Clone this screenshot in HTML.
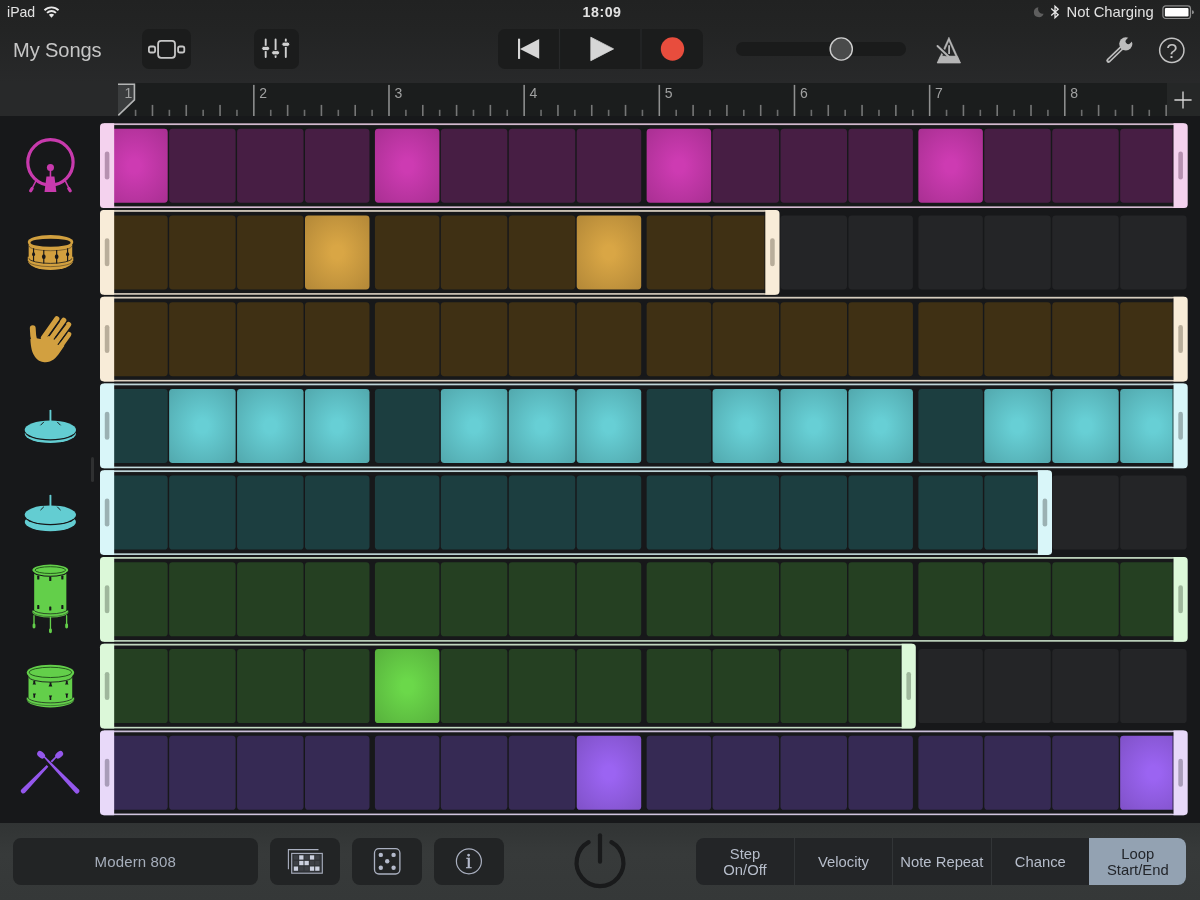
<!DOCTYPE html>
<html lang="en">
<head>
<meta charset="utf-8">
<title>Beat Sequencer</title>
<style>
*{box-sizing:border-box;margin:0;padding:0}
html,body{width:1200px;height:900px;overflow:hidden;background:#17181a}
body{position:relative;font-family:"Liberation Sans",Arial,sans-serif;color:#d4d4d4;-webkit-font-smoothing:antialiased}
#app{position:absolute;left:0;top:0;width:1200px;height:900px;will-change:transform}
#grid{position:absolute;left:0;top:0}
#top{position:absolute;left:0;top:0;width:1200px;height:116.3px;background:linear-gradient(#212222 0,#232424 30px,#28292a 83px,#28292a 100%)}
#status{position:absolute;left:0;top:0;width:1200px;height:24px;font-size:14.3px;color:#e2e2e2}
#status span{position:absolute;top:4px;white-space:nowrap;line-height:17px}
#status svg{position:absolute}
.tbtn{position:absolute;top:29.3px;height:39.7px;background:#1b1c1c;border-radius:7px}
.tbtn svg{position:absolute;left:0;top:0}
#mysongs{position:absolute;left:13px;top:37.5px;font-size:20.1px;line-height:24px;color:#c6c6c6;white-space:nowrap;letter-spacing:-0.1px}
#ruler{position:absolute;left:117.8px;top:83.4px;width:1049.2px;height:32.9px;background:#1b1d1d;overflow:hidden}
#rulerR{position:absolute;left:1167px;top:83.4px;width:33px;height:32.9px;background:#252727}
#ruler .bn{position:absolute;top:2.2px;font-size:14px;line-height:15px;color:#a0a1a1}
.ticon{position:absolute;left:10px;width:80px;height:80px}
#sidegrip{position:absolute;left:91px;top:456.5px;width:3px;height:25.5px;border-radius:1.5px;background:#2f3031}
#bottom{position:absolute;left:0;top:822.5px;width:1200px;height:77.5px;background:linear-gradient(#313434 0,#373a3a 40%,#353838 100%)}
.bbtn{position:absolute;top:15.5px;height:46.8px;background:#222425;border-radius:8px}
.bbtn svg{position:absolute;left:0;top:0}
#kit{left:12.8px;width:245px;color:#a6aebb;font-size:15px;line-height:47.6px;text-align:center;letter-spacing:.15px}
#seg{position:absolute;left:696.3px;top:15.5px;width:490.2px;height:46.8px;border-radius:8px;background:#232527;overflow:hidden;display:flex}
#seg div{flex:1 1 0;height:100%;border-left:1px solid #323537;display:flex;align-items:center;justify-content:center;text-align:center;font-size:14.8px;line-height:16.3px;color:#b7becb;padding-top:1px}
#seg div:first-child{border-left:none}
#seg span{display:block;transform:translateY(-.5px)}
#seg div.act{background:#93a2b2;color:#22252a;border-left:none}
</style>
</head>
<body>
<div id="app">
<div id="top">
  <div id="status">
    <span style="left:7px;font-size:14.1px">iPad</span>
    <svg style="left:43px;top:5.3px" width="17" height="13.4" viewBox="0 0 19 15"><g fill="none" stroke="#e8e8e8" stroke-width="2.1" stroke-linecap="butt"><path d="M1.6 5.9a11.2 11.2 0 0 1 15.8 0"/><path d="M4.5 8.8a7.1 7.1 0 0 1 10 0"/></g><path d="M9.5 14.2l-2.9-3.2a4 4 0 0 1 5.8 0z" fill="#e8e8e8"/></svg>
    <span style="left:582.5px;font-weight:bold;font-size:14.2px;letter-spacing:.55px">18:09</span>
    <svg style="left:1032px;top:6px" width="13" height="13" viewBox="0 0 13 13"><path d="M6.4 1.2a5 5 0 1 0 5.2 6.6A4.9 4.9 0 0 1 6.4 1.2z" fill="#5e5e5e"/></svg>
    <svg style="left:1049px;top:4px" width="12" height="16" viewBox="0 0 12 16"><path d="M2.2 4.6l7 6.2L6 13.8V2.2l3.2 3-7 6.2" fill="none" stroke="#e8e8e8" stroke-width="1.3" stroke-linejoin="miter"/></svg>
    <span style="left:1066.5px;font-size:14.8px">Not Charging</span>
    <svg style="left:1162px;top:5px" width="32" height="15" viewBox="0 0 32 15"><rect x=".9" y=".9" width="27.6" height="12.6" rx="2.8" fill="none" stroke="#8c8c8c" stroke-width="1.2"/><rect x="2.9" y="2.9" width="23.6" height="8.6" rx="1.2" fill="#fff"/><path d="M30 5.3v3.8a1.9 1.9 0 0 0 0-3.8z" fill="#8c8c8c"/></svg>
  </div>
  <div id="mysongs">My Songs</div>
  <div class="tbtn" style="left:141.8px;width:49.2px">
    <svg width="49" height="40" viewBox="0 0 49 40"><g fill="none" stroke="#c6c6c6" stroke-width="1.8"><rect x="16.1" y="11.9" width="16.9" height="16.9" rx="3"/><rect x="6.9" y="17.5" width="6.2" height="6" rx="1.8"/><rect x="36.1" y="17.5" width="6.2" height="6" rx="1.8"/></g></svg>
  </div>
  <div class="tbtn" style="left:254.3px;width:44.6px">
    <svg width="45" height="40" viewBox="0 0 45 40"><g stroke="#cfcfcf" stroke-width="1.9" stroke-linecap="round" fill="none"><path d="M11.7 10.4v17.6M21.6 10.4v17.6M31.8 10.4v17.6"/></g><g fill="#d2d2d2" stroke="#1b1c1c" stroke-width="1"><rect x="7.7" y="17.3" width="8" height="4.3" rx="2.1"/><rect x="17.6" y="21.6" width="8" height="4.3" rx="2.1"/><rect x="27.8" y="13.1" width="8" height="4.3" rx="2.1"/></g></svg>
  </div>
  <div class="tbtn" style="left:498px;width:205px;overflow:hidden">
    <svg width="205" height="40" viewBox="0 0 205 40"><path d="M61.5 0v40M143 0v40" stroke="#28292a" stroke-width="1.2"/><rect x="20" y="9.7" width="2.1" height="20.2" fill="#d6d6d6"/><path d="M41.2 10v19.8L22 19.9z" fill="#d6d6d6"/><path d="M92.8 8.2l22.8 11.7-22.8 11.8z" fill="#d6d6d6" stroke="#d6d6d6" stroke-width=".8" stroke-linejoin="round"/><circle cx="174.5" cy="20" r="11.7" fill="#e84d3d"/></svg>
  </div>
  <div style="position:absolute;left:735.6px;top:41.6px;width:170.6px;height:14.6px;border-radius:7.3px;background:#1a1b1b"></div>
  <svg style="position:absolute;left:826px;top:34px" width="30" height="30" viewBox="0 0 30 30"><circle cx="15.25" cy="15" r="11.1" fill="#4a4b4b" stroke="#cdcdcd" stroke-width="1.4"/></svg>
  <!-- metronome -->
  <svg style="position:absolute;left:930px;top:33px" width="36" height="34" viewBox="0 0 36 34"><path d="M18.9 4.1L7.2 30H30.5zM18.9 8.1L25.7 23.2H12z" fill="#b5b5b5" fill-rule="evenodd" stroke="#b5b5b5" stroke-width=".4" stroke-linejoin="round"/><path d="M7.4 12.9l11.2 10.7" stroke="#28292a" stroke-width="4.6"/><path d="M10.3 23.2H27.5L30.5 30H7.2z" fill="#b5b5b5" stroke="#b5b5b5" stroke-width=".4" stroke-linejoin="round"/><path d="M7.5 13l11.6 11" stroke="#b5b5b5" stroke-width="1.9" stroke-linecap="round"/><path d="M19.1 12.3v8.6" stroke="#b5b5b5" stroke-width="1.8"/></svg>
  <!-- wrench -->
  <svg style="position:absolute;left:1102px;top:33px" width="36" height="34" viewBox="0 0 36 34"><path d="M6.5 27.7L21 13.6" stroke="#bdbdbd" stroke-width="4.4" stroke-linecap="round"/><path d="M6.9 27.3L19 15.6" stroke="#28292a" stroke-width="1.2" stroke-linecap="round"/><defs><mask id="wm"><rect width="36" height="34" fill="#fff"/><path d="M26.3 8.3L33 1.6" stroke="#000" stroke-width="5.4" stroke-linecap="round"/></mask></defs><circle cx="23.8" cy="10.8" r="6.6" fill="#bdbdbd" mask="url(#wm)"/></svg>
  <!-- help -->
  <svg style="position:absolute;left:1157px;top:35px" width="30" height="30" viewBox="0 0 30 30"><circle cx="14.8" cy="15.3" r="12.15" fill="none" stroke="#c2c2c2" stroke-width="1.5"/><text x="14.9" y="22.8" text-anchor="middle" font-family="Liberation Sans, Arial, sans-serif" font-size="20" fill="#c2c2c2">?</text></svg>
  <div id="ruler">
    <svg style="position:absolute;left:0;top:0" width="20" height="34" viewBox="0 0 20 34"><path d="M0 .5H17.2V17.2L0 32.9z" fill="#3b3d3e"/><path d="M0 1.3H16.4V16.9L.3 32.4" fill="none" stroke="#b3b4b4" stroke-width="1.6"/></svg>
    <svg style="position:absolute;left:0;top:0" width="1050" height="33" viewBox="0 0 1050 33"><rect x="16.78" y="26.8" width="1.6" height="6.2" fill="#6c6d6d"/><rect x="33.67" y="21.9" width="1.6" height="11.1" fill="#767777"/><rect x="50.57" y="26.8" width="1.6" height="6.2" fill="#6c6d6d"/><rect x="67.46" y="21.9" width="1.6" height="11.1" fill="#767777"/><rect x="84.36" y="26.8" width="1.6" height="6.2" fill="#6c6d6d"/><rect x="101.25" y="21.9" width="1.6" height="11.1" fill="#767777"/><rect x="118.15" y="26.8" width="1.6" height="6.2" fill="#6c6d6d"/><rect x="135.06" y="1.9" width="1.55" height="31.1" fill="#8f9090"/><rect x="151.94" y="26.8" width="1.6" height="6.2" fill="#6c6d6d"/><rect x="168.83" y="21.9" width="1.6" height="11.1" fill="#767777"/><rect x="185.72" y="26.8" width="1.6" height="6.2" fill="#6c6d6d"/><rect x="202.62" y="21.9" width="1.6" height="11.1" fill="#767777"/><rect x="219.51" y="26.8" width="1.6" height="6.2" fill="#6c6d6d"/><rect x="236.41" y="21.9" width="1.6" height="11.1" fill="#767777"/><rect x="253.31" y="26.8" width="1.6" height="6.2" fill="#6c6d6d"/><rect x="270.22" y="1.9" width="1.55" height="31.1" fill="#8f9090"/><rect x="287.09" y="26.8" width="1.6" height="6.2" fill="#6c6d6d"/><rect x="303.99" y="21.9" width="1.6" height="11.1" fill="#767777"/><rect x="320.88" y="26.8" width="1.6" height="6.2" fill="#6c6d6d"/><rect x="337.78" y="21.9" width="1.6" height="11.1" fill="#767777"/><rect x="354.68" y="26.8" width="1.6" height="6.2" fill="#6c6d6d"/><rect x="371.57" y="21.9" width="1.6" height="11.1" fill="#767777"/><rect x="388.46" y="26.8" width="1.6" height="6.2" fill="#6c6d6d"/><rect x="405.38" y="1.9" width="1.55" height="31.1" fill="#8f9090"/><rect x="422.25" y="26.8" width="1.6" height="6.2" fill="#6c6d6d"/><rect x="439.15" y="21.9" width="1.6" height="11.1" fill="#767777"/><rect x="456.05" y="26.8" width="1.6" height="6.2" fill="#6c6d6d"/><rect x="472.94" y="21.9" width="1.6" height="11.1" fill="#767777"/><rect x="489.83" y="26.8" width="1.6" height="6.2" fill="#6c6d6d"/><rect x="506.73" y="21.9" width="1.6" height="11.1" fill="#767777"/><rect x="523.63" y="26.8" width="1.6" height="6.2" fill="#6c6d6d"/><rect x="540.54" y="1.9" width="1.55" height="31.1" fill="#8f9090"/><rect x="557.41" y="26.8" width="1.6" height="6.2" fill="#6c6d6d"/><rect x="574.31" y="21.9" width="1.6" height="11.1" fill="#767777"/><rect x="591.2" y="26.8" width="1.6" height="6.2" fill="#6c6d6d"/><rect x="608.1" y="21.9" width="1.6" height="11.1" fill="#767777"/><rect x="625" y="26.8" width="1.6" height="6.2" fill="#6c6d6d"/><rect x="641.89" y="21.9" width="1.6" height="11.1" fill="#767777"/><rect x="658.78" y="26.8" width="1.6" height="6.2" fill="#6c6d6d"/><rect x="675.7" y="1.9" width="1.55" height="31.1" fill="#8f9090"/><rect x="692.58" y="26.8" width="1.6" height="6.2" fill="#6c6d6d"/><rect x="709.47" y="21.9" width="1.6" height="11.1" fill="#767777"/><rect x="726.37" y="26.8" width="1.6" height="6.2" fill="#6c6d6d"/><rect x="743.26" y="21.9" width="1.6" height="11.1" fill="#767777"/><rect x="760.16" y="26.8" width="1.6" height="6.2" fill="#6c6d6d"/><rect x="777.05" y="21.9" width="1.6" height="11.1" fill="#767777"/><rect x="793.95" y="26.8" width="1.6" height="6.2" fill="#6c6d6d"/><rect x="810.86" y="1.9" width="1.55" height="31.1" fill="#8f9090"/><rect x="827.74" y="26.8" width="1.6" height="6.2" fill="#6c6d6d"/><rect x="844.63" y="21.9" width="1.6" height="11.1" fill="#767777"/><rect x="861.53" y="26.8" width="1.6" height="6.2" fill="#6c6d6d"/><rect x="878.42" y="21.9" width="1.6" height="11.1" fill="#767777"/><rect x="895.32" y="26.8" width="1.6" height="6.2" fill="#6c6d6d"/><rect x="912.21" y="21.9" width="1.6" height="11.1" fill="#767777"/><rect x="929.11" y="26.8" width="1.6" height="6.2" fill="#6c6d6d"/><rect x="946.02" y="1.9" width="1.55" height="31.1" fill="#8f9090"/><rect x="962.89" y="26.8" width="1.6" height="6.2" fill="#6c6d6d"/><rect x="979.79" y="21.9" width="1.6" height="11.1" fill="#767777"/><rect x="996.68" y="26.8" width="1.6" height="6.2" fill="#6c6d6d"/><rect x="1013.58" y="21.9" width="1.6" height="11.1" fill="#767777"/><rect x="1030.47" y="26.8" width="1.6" height="6.2" fill="#6c6d6d"/><rect x="1047.37" y="21.9" width="1.6" height="11.1" fill="#767777"/></svg><span class="bn" style="left:6.68px">1</span><span class="bn" style="left:141.44px">2</span><span class="bn" style="left:276.6px">3</span><span class="bn" style="left:411.76px">4</span><span class="bn" style="left:546.92px">5</span><span class="bn" style="left:682.08px">6</span><span class="bn" style="left:817.24px">7</span><span class="bn" style="left:952.4px">8</span>
  </div>
  <div id="rulerR"><svg style="position:absolute;left:7px;top:7.2px" width="18" height="18" viewBox="0 0 18 18"><path d="M9 .4v17.2M.4 9h17.2" stroke="#d6d6d6" stroke-width="1.35"/></svg></div>
</div>

<!-- kick -->
<svg class="ticon" style="top:125px" viewBox="0 0 900 900"><g fill="#c83aad" stroke="none"><circle cx="455" cy="420" r="255" fill="none" stroke="#c83aad" stroke-width="36"/><circle cx="455" cy="478" r="40"/><rect x="446" y="478" width="18" height="110"/><path d="M410 578h90l22 176H388z"/><path d="M292 628l-57 112M622 628l55 112" stroke="#c83aad" stroke-width="17" stroke-linecap="round" fill="none"/><path d="M249 714l-17 26M661 714l17 26" stroke="#c83aad" stroke-width="36" stroke-linecap="round" fill="none"/></g></svg>
<!-- snare -->
<svg class="ticon" style="top:215px" viewBox="0 0 900 900"><g fill="#d2a03f"><path d="M200 470V510A256 110 0 0 0 712 510V470z"/><path d="M210 305V490A246 62 0 0 0 700 490V305z"/><ellipse cx="456" cy="305" rx="256" ry="81"/></g><ellipse cx="456" cy="311" rx="226" ry="45" fill="#17181a"/><g stroke="#17181a" fill="none"><path d="M216 350A240 52 0 0 0 696 350" stroke-width="9" opacity=".55"/><path d="M210 488A246 62 0 0 0 700 488" stroke-width="9"/><path d="M204 515A252 66 0 0 0 708 515" stroke-width="7" opacity=".7"/><path d="M265 375V520M380 395V545M525 395V545M648 375V520" stroke-width="13"/></g><g fill="#17181a"><ellipse cx="265" cy="442" rx="17" ry="23"/><ellipse cx="380" cy="470" rx="21" ry="25"/><ellipse cx="525" cy="470" rx="21" ry="25"/><ellipse cx="648" cy="442" rx="17" ry="23"/></g></svg>
<!-- clap -->
<svg class="ticon" style="top:300px" viewBox="0 0 900 900"><g stroke="#d2a040" stroke-linecap="round" fill="none"><path d="M527 212L376 424M605 228L437 464M660 276L498 503" stroke-width="58"/><path d="M664 386L546 552" stroke-width="54"/><path d="M256 318C256 370 262 420 276 470" stroke-width="66"/></g><path d="M229 440C234 540 250 600 282 640C320 690 365 700 400 700C470 700 520 650 560 590L612 515L470 395L340 440L300 430z" fill="#d2a040"/><path d="M556 240L442 400M628 272L497 440M642 368L542 500" stroke="#17181a" stroke-width="13" stroke-linecap="round" fill="none"/></svg>
<!-- closed hat -->
<svg class="ticon" style="top:390px" viewBox="0 0 900 900"><ellipse cx="454" cy="492" rx="288" ry="104" fill="#63cdd2"/><ellipse cx="454" cy="462" rx="292" ry="106" fill="#17181a"/><ellipse cx="454" cy="449" rx="289" ry="105" fill="#63cdd2"/><path d="M455 232V352" stroke="#63cdd2" stroke-width="21" stroke-linecap="round"/><path d="M346 394L378 362M566 394L534 362" stroke="#17181a" stroke-width="11" stroke-linecap="round"/></svg>
<!-- open hat -->
<svg class="ticon" style="top:475px" viewBox="0 0 900 900"><ellipse cx="454" cy="528" rx="288" ry="104" fill="#63cdd2"/><ellipse cx="454" cy="460" rx="292" ry="106" fill="#17181a"/><ellipse cx="454" cy="447" rx="289" ry="105" fill="#63cdd2"/><path d="M455 232V352" stroke="#63cdd2" stroke-width="21" stroke-linecap="round"/><path d="M346 392L378 360M566 392L534 360" stroke="#17181a" stroke-width="11" stroke-linecap="round"/></svg>
<!-- floor tom -->
<svg class="ticon" style="top:558px" viewBox="0 0 900 900"><g fill="#63cf4a"><path d="M252 590V610A201.500 60 0 0 0 655 610V590z"/><path d="M272 140V590A181 50 0 0 0 634 590V140z"/><ellipse cx="453.500" cy="135" rx="201.500" ry="61"/></g><ellipse cx="453.500" cy="136" rx="172" ry="38" fill="none" stroke="#1d4d17" stroke-width="10"/><g fill="none" stroke="#17181a"><path d="M264 158A190 50 0 0 0 643 158" stroke-width="12"/><path d="M262 580A192 52 0 0 0 645 580" stroke-width="8"/><path d="M256 606A197 52 0 0 0 651 606" stroke-width="6" opacity=".8"/></g><g fill="#17181a"><rect x="306" y="198" width="24" height="44" rx="6"/><rect x="441" y="212" width="24" height="46" rx="6"/><rect x="577" y="198" width="24" height="44" rx="6"/><rect x="306" y="530" width="24" height="44" rx="6"/><rect x="441" y="545" width="24" height="46" rx="6"/><rect x="577" y="530" width="24" height="44" rx="6"/></g><g stroke="#63cf4a" fill="none" stroke-linecap="round"><path d="M270 650V770M455 668V826M637 650V770" stroke-width="15"/><path d="M270 752V776M455 808V830M637 752V776" stroke-width="32"/></g></svg>
<!-- tom -->
<svg class="ticon" style="top:645px" viewBox="0 0 900 900"><g fill="#63cf4a"><path d="M188 590V612A267 90 0 0 0 722 612V590z"/><path d="M208 311V590A246 70 0 0 0 700 590V311z"/><ellipse cx="455" cy="311" rx="267" ry="89"/></g><ellipse cx="455" cy="308" rx="238" ry="58" fill="none" stroke="#143a10" stroke-width="9"/><g fill="none" stroke="#17181a"><path d="M210 356A245 62 0 0 0 700 356" stroke-width="11" opacity=".9"/><path d="M200 585A255 66 0 0 0 710 585" stroke-width="8"/><path d="M192 612A263 70 0 0 0 718 612" stroke-width="6" opacity=".8"/></g><g fill="#17181a"><path d="M262 405h22v22l10 18h-40l8-18z"/><path d="M446 418h20v22l10 26h-42l12-26z"/><path d="M628 405h22v22l8 18h-40l10-18z"/><path d="M258 545h34l-10 22v26h-18v-26z"/><path d="M438 568h36l-10 22v28h-18v-28z"/><path d="M622 545h34l-8 22v26h-18v-26z"/></g></svg>
<!-- sticks -->
<svg class="ticon" style="top:732px" viewBox="0 0 900 900"><g fill="#9457ec"><path d="M526 285L514 273L131 644A27 27 0 0 0 169 684z"/><ellipse cx="553" cy="256" rx="50" ry="34" transform="rotate(-40 553 256)"/></g><path d="M380 296L752 664" stroke="#17181a" stroke-width="62" stroke-linecap="butt"/><g fill="#9457ec"><path d="M379 285L391 273L772 644A27 27 0 0 1 733 684z"/><ellipse cx="350" cy="256" rx="50" ry="34" transform="rotate(40 350 256)"/></g></svg>


<div id="sidegrip"></div>

<svg id="grid" width="1200" height="900" viewBox="0 0 1200 900">
<defs>
<radialGradient id="gkick" cx=".5" cy=".5" r=".78"><stop offset="0" stop-color="#cd3bb2"/><stop offset=".12" stop-color="#cd3bb2"/><stop offset="1" stop-color="#a42e8e"/></radialGradient>
<radialGradient id="gsnare" cx=".5" cy=".5" r=".78"><stop offset="0" stop-color="#d9a645"/><stop offset=".12" stop-color="#d9a645"/><stop offset="1" stop-color="#ae8436"/></radialGradient>
<radialGradient id="ghh" cx=".5" cy=".5" r=".78"><stop offset="0" stop-color="#67cfd5"/><stop offset=".12" stop-color="#67cfd5"/><stop offset="1" stop-color="#4fa3a8"/></radialGradient>
<radialGradient id="gftom" cx=".5" cy=".5" r=".78"><stop offset="0" stop-color="#6bd84a"/><stop offset=".12" stop-color="#6bd84a"/><stop offset="1" stop-color="#55ac3b"/></radialGradient>
<radialGradient id="gstick" cx=".5" cy=".5" r=".78"><stop offset="0" stop-color="#9b64f2"/><stop offset=".12" stop-color="#9b64f2"/><stop offset="1" stop-color="#7c4fc2"/></radialGradient>
</defs>
<g class="trk t-kick">
<rect x="101.2" y="128.66" width="66.5" height="74" rx="3.4" fill="url(#gkick)"/>
<rect x="169.13" y="128.66" width="66.5" height="74" rx="3.4" fill="#471e44"/>
<rect x="237.06" y="128.66" width="66.5" height="74" rx="3.4" fill="#471e44"/>
<rect x="304.99" y="128.66" width="64.5" height="74" rx="3.4" fill="#471e44"/>
<rect x="374.92" y="128.66" width="64.5" height="74" rx="3.4" fill="url(#gkick)"/>
<rect x="440.85" y="128.66" width="66.5" height="74" rx="3.4" fill="#471e44"/>
<rect x="508.78" y="128.66" width="66.5" height="74" rx="3.4" fill="#471e44"/>
<rect x="576.71" y="128.66" width="64.5" height="74" rx="3.4" fill="#471e44"/>
<rect x="646.64" y="128.66" width="64.5" height="74" rx="3.4" fill="url(#gkick)"/>
<rect x="712.57" y="128.66" width="66.5" height="74" rx="3.4" fill="#471e44"/>
<rect x="780.5" y="128.66" width="66.5" height="74" rx="3.4" fill="#471e44"/>
<rect x="848.43" y="128.66" width="64.5" height="74" rx="3.4" fill="#471e44"/>
<rect x="918.36" y="128.66" width="64.5" height="74" rx="3.4" fill="url(#gkick)"/>
<rect x="984.29" y="128.66" width="66.5" height="74" rx="3.4" fill="#471e44"/>
<rect x="1052.22" y="128.66" width="66.5" height="74" rx="3.4" fill="#471e44"/>
<rect x="1120.15" y="128.66" width="66.5" height="74" rx="3.4" fill="#471e44"/>
<rect x="104" y="123.33" width="1079.7" height="1.75" fill="#d3b9cf"/>
<rect x="104" y="206.38" width="1079.7" height="1.6" fill="#d8bdd4"/>
<rect x="1172.63" y="125.03" width="1" height="81.45" fill="#17181a"/>
<path d="M114.17 123.33H103.6a3.6 3.6 0 0 0 -3.6 3.6V204.38a3.6 3.6 0 0 0 3.6 3.6H114.17z" fill="#f4d2ee"/>
<path d="M1173.53 123.33H1184.1a3.6 3.6 0 0 1 3.6 3.6V204.38a3.6 3.6 0 0 1 -3.6 3.6H1173.53z" fill="#f4d2ee"/>
<rect x="104.78" y="151.53" width="4.6" height="28" rx="2.3" fill="#b691b0"/>
<rect x="1178.32" y="151.53" width="4.6" height="28" rx="2.3" fill="#b691b0"/>
</g>
<g class="trk t-snare">
<rect x="101.2" y="215.4" width="66.5" height="74" rx="3.4" fill="#3f3014"/>
<rect x="169.13" y="215.4" width="66.5" height="74" rx="3.4" fill="#3f3014"/>
<rect x="237.06" y="215.4" width="66.5" height="74" rx="3.4" fill="#3f3014"/>
<rect x="304.99" y="215.4" width="64.5" height="74" rx="3.4" fill="url(#gsnare)"/>
<rect x="374.92" y="215.4" width="64.5" height="74" rx="3.4" fill="#3f3014"/>
<rect x="440.85" y="215.4" width="66.5" height="74" rx="3.4" fill="#3f3014"/>
<rect x="508.78" y="215.4" width="66.5" height="74" rx="3.4" fill="#3f3014"/>
<rect x="576.71" y="215.4" width="64.5" height="74" rx="3.4" fill="url(#gsnare)"/>
<rect x="646.64" y="215.4" width="64.5" height="74" rx="3.4" fill="#3f3014"/>
<rect x="712.57" y="215.4" width="66.5" height="74" rx="3.4" fill="#3f3014"/>
<rect x="780.5" y="215.4" width="66.5" height="74" rx="3.4" fill="#242527"/>
<rect x="848.43" y="215.4" width="64.5" height="74" rx="3.4" fill="#242527"/>
<rect x="918.36" y="215.4" width="64.5" height="74" rx="3.4" fill="#242527"/>
<rect x="984.29" y="215.4" width="66.5" height="74" rx="3.4" fill="#242527"/>
<rect x="1052.22" y="215.4" width="66.5" height="74" rx="3.4" fill="#242527"/>
<rect x="1120.15" y="215.4" width="66.5" height="74" rx="3.4" fill="#242527"/>
<rect x="104" y="210.07" width="671.5" height="1.75" fill="#d6cdbf"/>
<rect x="104" y="293.12" width="671.5" height="1.6" fill="#dcd2c3"/>
<rect x="764.43" y="211.77" width="1" height="81.45" fill="#17181a"/>
<path d="M114.17 210.07H103.6a3.6 3.6 0 0 0 -3.6 3.6V291.12a3.6 3.6 0 0 0 3.6 3.6H114.17z" fill="#f8ecd8"/>
<path d="M765.33 210.07H775.9a3.6 3.6 0 0 1 3.6 3.6V291.12a3.6 3.6 0 0 1 -3.6 3.6H765.33z" fill="#f8ecd8"/>
<rect x="104.78" y="238.27" width="4.6" height="28" rx="2.3" fill="#b9ae9b"/>
<rect x="770.12" y="238.27" width="4.6" height="28" rx="2.3" fill="#b9ae9b"/>
</g>
<g class="trk t-clap">
<rect x="101.2" y="302.14" width="66.5" height="74" rx="3.4" fill="#3f3014"/>
<rect x="169.13" y="302.14" width="66.5" height="74" rx="3.4" fill="#3f3014"/>
<rect x="237.06" y="302.14" width="66.5" height="74" rx="3.4" fill="#3f3014"/>
<rect x="304.99" y="302.14" width="64.5" height="74" rx="3.4" fill="#3f3014"/>
<rect x="374.92" y="302.14" width="64.5" height="74" rx="3.4" fill="#3f3014"/>
<rect x="440.85" y="302.14" width="66.5" height="74" rx="3.4" fill="#3f3014"/>
<rect x="508.78" y="302.14" width="66.5" height="74" rx="3.4" fill="#3f3014"/>
<rect x="576.71" y="302.14" width="64.5" height="74" rx="3.4" fill="#3f3014"/>
<rect x="646.64" y="302.14" width="64.5" height="74" rx="3.4" fill="#3f3014"/>
<rect x="712.57" y="302.14" width="66.5" height="74" rx="3.4" fill="#3f3014"/>
<rect x="780.5" y="302.14" width="66.5" height="74" rx="3.4" fill="#3f3014"/>
<rect x="848.43" y="302.14" width="64.5" height="74" rx="3.4" fill="#3f3014"/>
<rect x="918.36" y="302.14" width="64.5" height="74" rx="3.4" fill="#3f3014"/>
<rect x="984.29" y="302.14" width="66.5" height="74" rx="3.4" fill="#3f3014"/>
<rect x="1052.22" y="302.14" width="66.5" height="74" rx="3.4" fill="#3f3014"/>
<rect x="1120.15" y="302.14" width="66.5" height="74" rx="3.4" fill="#3f3014"/>
<rect x="104" y="296.81" width="1079.7" height="1.75" fill="#d6cdbf"/>
<rect x="104" y="379.86" width="1079.7" height="1.6" fill="#dcd2c3"/>
<rect x="1172.63" y="298.51" width="1" height="81.45" fill="#17181a"/>
<path d="M114.17 296.81H103.6a3.6 3.6 0 0 0 -3.6 3.6V377.86a3.6 3.6 0 0 0 3.6 3.6H114.17z" fill="#f8ecd8"/>
<path d="M1173.53 296.81H1184.1a3.6 3.6 0 0 1 3.6 3.6V377.86a3.6 3.6 0 0 1 -3.6 3.6H1173.53z" fill="#f8ecd8"/>
<rect x="104.78" y="325.01" width="4.6" height="28" rx="2.3" fill="#b9ae9b"/>
<rect x="1178.32" y="325.01" width="4.6" height="28" rx="2.3" fill="#b9ae9b"/>
</g>
<g class="trk t-hh">
<rect x="101.2" y="388.88" width="66.5" height="74" rx="3.4" fill="#1c3e40"/>
<rect x="169.13" y="388.88" width="66.5" height="74" rx="3.4" fill="url(#ghh)"/>
<rect x="237.06" y="388.88" width="66.5" height="74" rx="3.4" fill="url(#ghh)"/>
<rect x="304.99" y="388.88" width="64.5" height="74" rx="3.4" fill="url(#ghh)"/>
<rect x="374.92" y="388.88" width="64.5" height="74" rx="3.4" fill="#1c3e40"/>
<rect x="440.85" y="388.88" width="66.5" height="74" rx="3.4" fill="url(#ghh)"/>
<rect x="508.78" y="388.88" width="66.5" height="74" rx="3.4" fill="url(#ghh)"/>
<rect x="576.71" y="388.88" width="64.5" height="74" rx="3.4" fill="url(#ghh)"/>
<rect x="646.64" y="388.88" width="64.5" height="74" rx="3.4" fill="#1c3e40"/>
<rect x="712.57" y="388.88" width="66.5" height="74" rx="3.4" fill="url(#ghh)"/>
<rect x="780.5" y="388.88" width="66.5" height="74" rx="3.4" fill="url(#ghh)"/>
<rect x="848.43" y="388.88" width="64.5" height="74" rx="3.4" fill="url(#ghh)"/>
<rect x="918.36" y="388.88" width="64.5" height="74" rx="3.4" fill="#1c3e40"/>
<rect x="984.29" y="388.88" width="66.5" height="74" rx="3.4" fill="url(#ghh)"/>
<rect x="1052.22" y="388.88" width="66.5" height="74" rx="3.4" fill="url(#ghh)"/>
<rect x="1120.15" y="388.88" width="66.5" height="74" rx="3.4" fill="url(#ghh)"/>
<rect x="104" y="383.55" width="1079.7" height="1.75" fill="#bed4d8"/>
<rect x="104" y="466.6" width="1079.7" height="1.6" fill="#c3dadd"/>
<rect x="1172.63" y="385.25" width="1" height="81.45" fill="#17181a"/>
<path d="M114.17 383.55H103.6a3.6 3.6 0 0 0 -3.6 3.6V464.6a3.6 3.6 0 0 0 3.6 3.6H114.17z" fill="#d9f6f9"/>
<path d="M1173.53 383.55H1184.1a3.6 3.6 0 0 1 3.6 3.6V464.6a3.6 3.6 0 0 1 -3.6 3.6H1173.53z" fill="#d9f6f9"/>
<rect x="104.78" y="411.75" width="4.6" height="28" rx="2.3" fill="#9bb1b3"/>
<rect x="1178.32" y="411.75" width="4.6" height="28" rx="2.3" fill="#9bb1b3"/>
</g>
<g class="trk t-ohh">
<rect x="101.2" y="475.62" width="66.5" height="74" rx="3.4" fill="#1c3e40"/>
<rect x="169.13" y="475.62" width="66.5" height="74" rx="3.4" fill="#1c3e40"/>
<rect x="237.06" y="475.62" width="66.5" height="74" rx="3.4" fill="#1c3e40"/>
<rect x="304.99" y="475.62" width="64.5" height="74" rx="3.4" fill="#1c3e40"/>
<rect x="374.92" y="475.62" width="64.5" height="74" rx="3.4" fill="#1c3e40"/>
<rect x="440.85" y="475.62" width="66.5" height="74" rx="3.4" fill="#1c3e40"/>
<rect x="508.78" y="475.62" width="66.5" height="74" rx="3.4" fill="#1c3e40"/>
<rect x="576.71" y="475.62" width="64.5" height="74" rx="3.4" fill="#1c3e40"/>
<rect x="646.64" y="475.62" width="64.5" height="74" rx="3.4" fill="#1c3e40"/>
<rect x="712.57" y="475.62" width="66.5" height="74" rx="3.4" fill="#1c3e40"/>
<rect x="780.5" y="475.62" width="66.5" height="74" rx="3.4" fill="#1c3e40"/>
<rect x="848.43" y="475.62" width="64.5" height="74" rx="3.4" fill="#1c3e40"/>
<rect x="918.36" y="475.62" width="64.5" height="74" rx="3.4" fill="#1c3e40"/>
<rect x="984.29" y="475.62" width="66.5" height="74" rx="3.4" fill="#1c3e40"/>
<rect x="1052.22" y="475.62" width="66.5" height="74" rx="3.4" fill="#242527"/>
<rect x="1120.15" y="475.62" width="66.5" height="74" rx="3.4" fill="#242527"/>
<rect x="104" y="470.29" width="944" height="1.75" fill="#bed4d8"/>
<rect x="104" y="553.34" width="944" height="1.6" fill="#c3dadd"/>
<rect x="1036.93" y="471.99" width="1" height="81.45" fill="#17181a"/>
<path d="M114.17 470.29H103.6a3.6 3.6 0 0 0 -3.6 3.6V551.34a3.6 3.6 0 0 0 3.6 3.6H114.17z" fill="#d9f6f9"/>
<path d="M1037.83 470.29H1048.4a3.6 3.6 0 0 1 3.6 3.6V551.34a3.6 3.6 0 0 1 -3.6 3.6H1037.83z" fill="#d9f6f9"/>
<rect x="104.78" y="498.49" width="4.6" height="28" rx="2.3" fill="#9bb1b3"/>
<rect x="1042.62" y="498.49" width="4.6" height="28" rx="2.3" fill="#9bb1b3"/>
</g>
<g class="trk t-ftom">
<rect x="101.2" y="562.36" width="66.5" height="74" rx="3.4" fill="#254022"/>
<rect x="169.13" y="562.36" width="66.5" height="74" rx="3.4" fill="#254022"/>
<rect x="237.06" y="562.36" width="66.5" height="74" rx="3.4" fill="#254022"/>
<rect x="304.99" y="562.36" width="64.5" height="74" rx="3.4" fill="#254022"/>
<rect x="374.92" y="562.36" width="64.5" height="74" rx="3.4" fill="#254022"/>
<rect x="440.85" y="562.36" width="66.5" height="74" rx="3.4" fill="#254022"/>
<rect x="508.78" y="562.36" width="66.5" height="74" rx="3.4" fill="#254022"/>
<rect x="576.71" y="562.36" width="64.5" height="74" rx="3.4" fill="#254022"/>
<rect x="646.64" y="562.36" width="64.5" height="74" rx="3.4" fill="#254022"/>
<rect x="712.57" y="562.36" width="66.5" height="74" rx="3.4" fill="#254022"/>
<rect x="780.5" y="562.36" width="66.5" height="74" rx="3.4" fill="#254022"/>
<rect x="848.43" y="562.36" width="64.5" height="74" rx="3.4" fill="#254022"/>
<rect x="918.36" y="562.36" width="64.5" height="74" rx="3.4" fill="#254022"/>
<rect x="984.29" y="562.36" width="66.5" height="74" rx="3.4" fill="#254022"/>
<rect x="1052.22" y="562.36" width="66.5" height="74" rx="3.4" fill="#254022"/>
<rect x="1120.15" y="562.36" width="66.5" height="74" rx="3.4" fill="#254022"/>
<rect x="104" y="557.03" width="1079.7" height="1.75" fill="#c1d6bf"/>
<rect x="104" y="640.08" width="1079.7" height="1.6" fill="#c5dcc4"/>
<rect x="1172.63" y="558.73" width="1" height="81.45" fill="#17181a"/>
<path d="M114.17 557.03H103.6a3.6 3.6 0 0 0 -3.6 3.6V638.08a3.6 3.6 0 0 0 3.6 3.6H114.17z" fill="#dcf8d9"/>
<path d="M1173.53 557.03H1184.1a3.6 3.6 0 0 1 3.6 3.6V638.08a3.6 3.6 0 0 1 -3.6 3.6H1173.53z" fill="#dcf8d9"/>
<rect x="104.78" y="585.23" width="4.6" height="28" rx="2.3" fill="#9fb79c"/>
<rect x="1178.32" y="585.23" width="4.6" height="28" rx="2.3" fill="#9fb79c"/>
</g>
<g class="trk t-tom">
<rect x="101.2" y="649.1" width="66.5" height="74" rx="3.4" fill="#254022"/>
<rect x="169.13" y="649.1" width="66.5" height="74" rx="3.4" fill="#254022"/>
<rect x="237.06" y="649.1" width="66.5" height="74" rx="3.4" fill="#254022"/>
<rect x="304.99" y="649.1" width="64.5" height="74" rx="3.4" fill="#254022"/>
<rect x="374.92" y="649.1" width="64.5" height="74" rx="3.4" fill="url(#gftom)"/>
<rect x="440.85" y="649.1" width="66.5" height="74" rx="3.4" fill="#254022"/>
<rect x="508.78" y="649.1" width="66.5" height="74" rx="3.4" fill="#254022"/>
<rect x="576.71" y="649.1" width="64.5" height="74" rx="3.4" fill="#254022"/>
<rect x="646.64" y="649.1" width="64.5" height="74" rx="3.4" fill="#254022"/>
<rect x="712.57" y="649.1" width="66.5" height="74" rx="3.4" fill="#254022"/>
<rect x="780.5" y="649.1" width="66.5" height="74" rx="3.4" fill="#254022"/>
<rect x="848.43" y="649.1" width="64.5" height="74" rx="3.4" fill="#254022"/>
<rect x="918.36" y="649.1" width="64.5" height="74" rx="3.4" fill="#242527"/>
<rect x="984.29" y="649.1" width="66.5" height="74" rx="3.4" fill="#242527"/>
<rect x="1052.22" y="649.1" width="66.5" height="74" rx="3.4" fill="#242527"/>
<rect x="1120.15" y="649.1" width="66.5" height="74" rx="3.4" fill="#242527"/>
<rect x="104" y="643.77" width="807.8" height="1.75" fill="#c1d6bf"/>
<rect x="104" y="726.82" width="807.8" height="1.6" fill="#c5dcc4"/>
<rect x="900.73" y="645.47" width="1" height="81.45" fill="#17181a"/>
<path d="M114.17 643.77H103.6a3.6 3.6 0 0 0 -3.6 3.6V724.82a3.6 3.6 0 0 0 3.6 3.6H114.17z" fill="#dcf8d9"/>
<path d="M901.63 643.77H912.2a3.6 3.6 0 0 1 3.6 3.6V724.82a3.6 3.6 0 0 1 -3.6 3.6H901.63z" fill="#dcf8d9"/>
<rect x="104.78" y="671.97" width="4.6" height="28" rx="2.3" fill="#9fb79c"/>
<rect x="906.41" y="671.97" width="4.6" height="28" rx="2.3" fill="#9fb79c"/>
</g>
<g class="trk t-stick">
<rect x="101.2" y="735.84" width="66.5" height="74" rx="3.4" fill="#362a54"/>
<rect x="169.13" y="735.84" width="66.5" height="74" rx="3.4" fill="#362a54"/>
<rect x="237.06" y="735.84" width="66.5" height="74" rx="3.4" fill="#362a54"/>
<rect x="304.99" y="735.84" width="64.5" height="74" rx="3.4" fill="#362a54"/>
<rect x="374.92" y="735.84" width="64.5" height="74" rx="3.4" fill="#362a54"/>
<rect x="440.85" y="735.84" width="66.5" height="74" rx="3.4" fill="#362a54"/>
<rect x="508.78" y="735.84" width="66.5" height="74" rx="3.4" fill="#362a54"/>
<rect x="576.71" y="735.84" width="64.5" height="74" rx="3.4" fill="url(#gstick)"/>
<rect x="646.64" y="735.84" width="64.5" height="74" rx="3.4" fill="#362a54"/>
<rect x="712.57" y="735.84" width="66.5" height="74" rx="3.4" fill="#362a54"/>
<rect x="780.5" y="735.84" width="66.5" height="74" rx="3.4" fill="#362a54"/>
<rect x="848.43" y="735.84" width="64.5" height="74" rx="3.4" fill="#362a54"/>
<rect x="918.36" y="735.84" width="64.5" height="74" rx="3.4" fill="#362a54"/>
<rect x="984.29" y="735.84" width="66.5" height="74" rx="3.4" fill="#362a54"/>
<rect x="1052.22" y="735.84" width="66.5" height="74" rx="3.4" fill="#362a54"/>
<rect x="1120.15" y="735.84" width="66.5" height="74" rx="3.4" fill="url(#gstick)"/>
<rect x="104" y="730.51" width="1079.7" height="1.75" fill="#cabed8"/>
<rect x="104" y="813.56" width="1079.7" height="1.6" fill="#cfc3dd"/>
<rect x="1172.63" y="732.21" width="1" height="81.45" fill="#17181a"/>
<path d="M114.17 730.51H103.6a3.6 3.6 0 0 0 -3.6 3.6V811.56a3.6 3.6 0 0 0 3.6 3.6H114.17z" fill="#e8d9f9"/>
<path d="M1173.53 730.51H1184.1a3.6 3.6 0 0 1 3.6 3.6V811.56a3.6 3.6 0 0 1 -3.6 3.6H1173.53z" fill="#e8d9f9"/>
<rect x="104.78" y="758.71" width="4.6" height="28" rx="2.3" fill="#a99db9"/>
<rect x="1178.32" y="758.71" width="4.6" height="28" rx="2.3" fill="#a99db9"/>
</g>
</svg>

<div id="bottom">
  <div class="bbtn" id="kit">Modern 808</div>
  <div class="bbtn" style="left:269.5px;width:70.3px">
    <svg width="70" height="46" viewBox="0 0 70 46"><path d="M18.4 31.3V11.6H48.5" fill="none" stroke="#aab0c0" stroke-width="1.1"/><rect x="21.7" y="15.4" width="30.6" height="19.8" fill="#2f3236" stroke="#aab0c0" stroke-width="1.1"/><rect x="23.8" y="17.3" width="4.3" height="4.3" fill="#3d4046"/><rect x="29.2" y="17.3" width="4.3" height="4.3" fill="#ccd1e0"/><rect x="34.5" y="17.3" width="4.3" height="4.3" fill="#3d4046"/><rect x="39.9" y="17.3" width="4.3" height="4.3" fill="#ccd1e0"/><rect x="45.2" y="17.3" width="4.3" height="4.3" fill="#3d4046"/><rect x="23.8" y="22.9" width="4.3" height="4.3" fill="#3d4046"/><rect x="29.2" y="22.9" width="4.3" height="4.3" fill="#ccd1e0"/><rect x="34.5" y="22.9" width="4.3" height="4.3" fill="#ccd1e0"/><rect x="39.9" y="22.9" width="4.3" height="4.3" fill="#3d4046"/><rect x="45.2" y="22.9" width="4.3" height="4.3" fill="#3d4046"/><rect x="23.8" y="28.5" width="4.3" height="4.3" fill="#ccd1e0"/><rect x="29.2" y="28.5" width="4.3" height="4.3" fill="#3d4046"/><rect x="34.5" y="28.5" width="4.3" height="4.3" fill="#3d4046"/><rect x="39.9" y="28.5" width="4.3" height="4.3" fill="#ccd1e0"/><rect x="45.2" y="28.5" width="4.3" height="4.3" fill="#ccd1e0"/></svg>
  </div>
  <div class="bbtn" style="left:351.7px;width:70.3px">
    <svg width="70" height="46" viewBox="0 0 70 46"><rect x="22.5" y="10.6" width="25.4" height="25.4" rx="4.4" fill="none" stroke="#aab0c0" stroke-width="1.3"/><g fill="#b4bacb"><circle cx="28.8" cy="16.9" r="2.2"/><circle cx="41.6" cy="16.9" r="2.2"/><circle cx="35.2" cy="23.3" r="2.2"/><circle cx="28.8" cy="29.7" r="2.2"/><circle cx="41.6" cy="29.7" r="2.2"/></g></svg>
  </div>
  <div class="bbtn" style="left:433.7px;width:70.3px">
    <svg width="70" height="46" viewBox="0 0 70 46"><circle cx="34.9" cy="23.3" r="12.5" fill="none" stroke="#aab0c0" stroke-width="1.2"/><text x="34.9" y="30.2" text-anchor="middle" font-family="Liberation Serif, Times, serif" font-size="22" fill="#b4bacb" stroke="#b4bacb" stroke-width=".35">i</text></svg>
  </div>
  <svg style="position:absolute;left:570px;top:6px" width="60" height="66" viewBox="0 0 60 66"><path d="M18.6 13.2a23.4 23.4 0 1 0 22.8 0" fill="none" stroke="#191a1b" stroke-width="4.2" stroke-linecap="round"/><path d="M30 6.3v26.4" stroke="#191a1b" stroke-width="4.2" stroke-linecap="round"/></svg>
  <div id="seg"><div><span>Step<br>On/Off</span></div><div><span>Velocity</span></div><div><span>Note Repeat</span></div><div><span>Chance</span></div><div class="act"><span>Loop<br>Start/End</span></div></div>
</div>
</div>
</body>
</html>
